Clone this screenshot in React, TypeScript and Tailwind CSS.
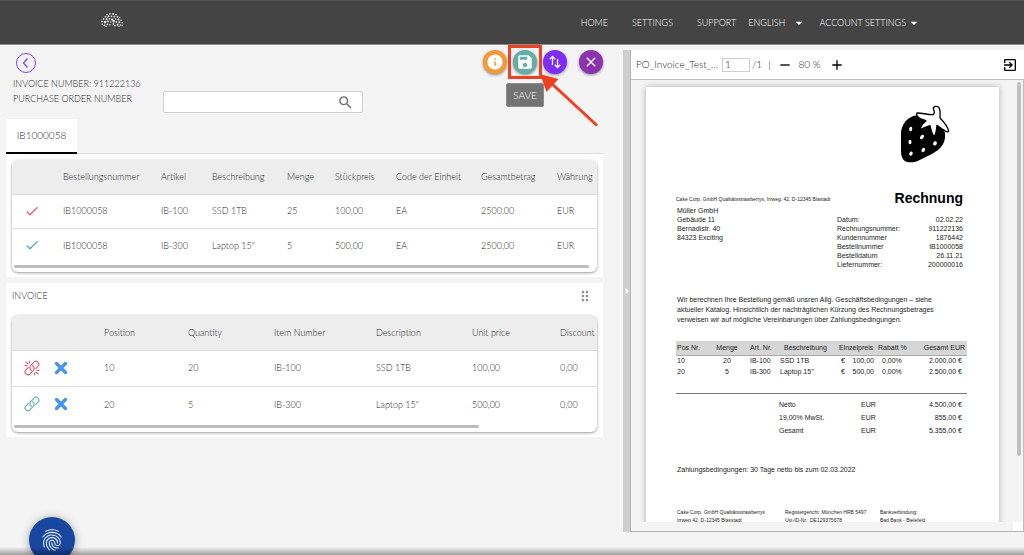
import React from "react";
import {
  MdArrowDropDown,
  MdSave,
  MdInfo,
  MdClose,
  MdSearch,
  MdCheck,
  MdAdd,
  MdRemove,
  MdExitToApp,
  MdFingerprint,
  MdDragIndicator,
  MdArrowRight,
} from "react-icons/md";

const logoDots: [number, number, number][] = [
  [6, 1.6, 0.8], [9, 0.9, 0.8], [12, 1, 0.9], [15, 1.8, 0.8], [4.5, 3.6, 0.9], [7.5, 3.2, 1],
  [10.5, 3.4, 0.8], [13.5, 3.6, 0.9], [16.5, 3.8, 0.9], [18.8, 4.6, 0.7], [2.6, 5.8, 0.9], [5.6, 6, 0.9],
  [8.4, 5.8, 0.9], [11, 6.4, 1], [12.6, 8, 1.3], [14.6, 6, 0.8], [17.4, 6.6, 1], [20, 7.2, 0.8],
  [1, 8.4, 0.9], [4, 9, 1.3], [7, 8.4, 0.9], [9.6, 9, 0.8], [15.4, 9, 0.9], [18.4, 9.2, 0.9],
  [21.2, 9.8, 0.8], [1.2, 11.4, 0.8], [3.4, 12.4, 0.9], [6.4, 11.4, 0.9], [9, 11.8, 0.8], [12.4, 11, 0.9],
  [14, 12.8, 0.8], [16.6, 11.8, 1], [19.4, 12, 0.8], [21.2, 12.4, 0.8], [5, 13.2, 0.7], [18, 13.2, 0.7],
];

function Logo() {
  return (
    <svg viewBox="0 0 22 14" className="h-3.5 w-[22px]" fill="#e4e4e4" stroke="#bdbdbd" strokeWidth="0.4">
      <path d="M4 9 7 8.4 5.6 6 7.5 3.2M12.6 8 11 6.4 13.5 3.6M17.4 6.6 18.4 9.2 16.6 11.8M12.6 8 12.4 11M4 9 3.4 12.4" fill="none" />
      {logoDots.map(([cx, cy, r], i) => (
        <circle key={i} cx={cx} cy={cy} r={r} stroke="none" />
      ))}
    </svg>
  );
}

function Strawberry() {
  return (
    <svg viewBox="88 70 156 180" className="h-[60px] w-[52px]">
      <path
        d="M94 160C94 130 116 106 144 104C184 102 221 128 226 158C229 186 214 206 188 219L144 241C134 246 120 246 110 243C98 238 95 228 94 212z"
        fill="#000"
      />
      <g fill="#fff">
        <ellipse cx="123" cy="145" rx="4.5" ry="7" transform="rotate(15 123 145)" />
        <ellipse cx="121" cy="184" rx="4.5" ry="7" />
        <ellipse cx="124" cy="219" rx="5" ry="6.5" transform="rotate(25 124 219)" />
        <ellipse cx="157" cy="169" rx="5" ry="7.5" transform="rotate(40 157 169)" />
        <ellipse cx="161" cy="208" rx="5" ry="7" transform="rotate(30 161 208)" />
        <ellipse cx="196" cy="188" rx="5.5" ry="6.5" transform="rotate(30 196 188)" />
      </g>
      <path
        d="M142 97c14-1 32 6 49 5 5-6 4-10 0-17-1-8 12-11 17-4 5 9 3 20 3 31 12 12 24 28 26 40-3 3-10 0-14-4-8-3-15-10-21-14-1 11-2 25-8 34-9-9-10-21-13-33-9 3-18 6-29 12 0-9 8-19 17-26-10-6-21-5-26-15-3-4-3-7-1-9z"
        fill="#fff"
        stroke="#000"
        strokeWidth="4"
        strokeLinejoin="round"
      />
    </svg>
  );
}

function SwapIcon() {
  return (
    <svg viewBox="0 0 16 16" className="size-4" fill="none" stroke="#fff" strokeWidth="1.3">
      <path d="M5.5 11V2.5M2.8 5.2 5.5 2.5l2.7 2.7M10.5 5v8.5M7.8 10.8l2.7 2.7 2.7-2.7" />
    </svg>
  );
}

function LinkIcon({ broken = false }: { broken?: boolean }) {
  return (
    <svg
      viewBox="0 0 24 24"
      className={broken ? "size-4 text-[#e0647d]" : "size-4 text-[#63b9ae]"}
      fill="none"
      stroke="currentColor"
      strokeWidth="1.8"
      strokeLinecap="round"
    >
      <path d="M11 15.5a4.600 4.600 0 0 1-1-7l5-5.200a4.200 4.200 0 0 1 6.200 6L17.500 13" />
      <path d="M13 8.500a4.600 4.600 0 0 1 1 7l-5 5.200a4.200 4.200 0 0 1-6.200-6L6.500 11" />
      {broken && <path d="M3 3l3 3M8.500 1.500v3M1.500 8.500h3M21 21l-3-3M15.500 22.500v-3M22.500 15.500h-3" />}
    </svg>
  );
}

function CrossIcon() {
  return (
    <svg viewBox="0 0 14 14" className="size-3.5" stroke="#4595ea" strokeWidth="3.400" strokeLinecap="round">
      <path d="M2.500 2.500l9 9M11.500 2.500l-9 9" />
    </svg>
  );
}

const round = "flex size-6 items-center justify-center rounded-full text-white shadow-[0_1px_3px_rgba(0,0,0,0.45)]";

const orderHead = ["Bestellungsnummer", "Artikel", "Beschreibung", "Menge", "Stückpreis", "Code der Einheit", "Gesamtbetrag", "Währung"];
const orderRows = [
  ["IB1000058", "IB-100", "SSD 1TB", "25", "100,00", "EA", "2500,00", "EUR"],
  ["IB1000058", "IB-300", 'Laptop 15"', "5", "500,00", "EA", "2500,00", "EUR"],
];
const orderCols = ["w-[51px]", "w-[98px]", "w-[51px]", "w-[75px]", "w-[48px]", "w-[61px]", "w-[85px]", "w-[76px]", "w-[41px]"];

const invoiceHead = ["Position", "Quantity", "Item Number", "Description", "Unit price", "Discount"];
const invoiceRows = [
  ["10", "20", "IB-100", "SSD 1TB", "100,00", "0,00"],
  ["20", "5", "IB-300", 'Laptop 15"', "500,00", "0,00"],
];
const invoiceCols = ["w-[92px]", "w-[84px]", "w-[86px]", "w-[102px]", "w-[96px]", "w-[88px]", "w-[38px]"];

const tableBox = "overflow-hidden rounded-md bg-white shadow-[0_1px_3px_rgba(0,0,0,0.4)]";

function Header() {
  const link = "flex items-center";
  return (
    <header className="flex h-[45px] shrink-0 items-center border-t border-b border-t-[#50505a] border-b-[#8a8a8a] bg-[#444] pr-[102px] pl-[101px] text-[9px] text-white">
      <a href="#home" aria-label="Start" className="-mt-1.5"><Logo /></a>
      <nav className="ml-auto flex items-center">
        <a href="#home" className={link}>HOME</a>
        <a href="#settings" className={`${link} ml-6`}>SETTINGS</a>
        <a href="#support" className={`${link} ml-6`}>SUPPORT</a>
        <button type="button" className={`${link} ml-3 gap-1.5`}>ENGLISH <MdArrowDropDown className="size-4 text-white" /></button>
        <button type="button" className={`${link} ml-3`}>ACCOUNT SETTINGS <MdArrowDropDown className="size-4 text-white" /></button>
      </nav>
    </header>
  );
}

function WorkPane() {
  return (
    <section className="min-w-0 pr-5 pl-1.5 text-[#1f1f1f]">
      <div className="flex h-[74px] items-start">
        <div className="w-[157px] pt-2 pl-[7px] text-[9px] leading-[15px]">
          <button type="button" aria-label="Back" className="ml-[3px] flex size-5 items-center justify-center rounded-full border border-[#8a3ff0]">
            <svg viewBox="0 0 12 12" className="size-3" fill="none" stroke="#8a3ff0" strokeWidth="1.300"><path d="M7.500 1.500 3.500 6l4 4.500" /></svg>
          </button>
          <p className="mt-[3px] whitespace-nowrap">INVOICE NUMBER: 911222136</p>
          <label htmlFor="po" className="block whitespace-nowrap">PURCHASE ORDER NUMBER</label>
        </div>
        <div className="mt-[46px] flex h-[22px] w-[200px] items-center rounded-xs border border-[#cfcfcf] bg-white pr-2">
          <input id="po" className="min-w-0 flex-1 px-2 text-[10px] outline-none" />
          <MdSearch className="size-[17px] text-[#6e6e6e]" />
        </div>
        <div className="mt-[5px] ml-auto flex gap-1.5">
          <button type="button" aria-label="Information" className={`${round} bg-[#f29a37]`}><MdInfo className="size-[18px]" /></button>
          <div className="relative">
            <button type="button" aria-label="Save" className={`${round} bg-[#64aea5]`}><MdSave className="size-[18px]" /></button>
            <div className="absolute -top-[5px] -left-[5px] size-[34px] border-3 border-[#ee4023]" />
            <span className="absolute top-[33px] -left-[7px] flex h-6 w-[38px] items-center justify-center rounded-xs border border-[#8c8c8c] bg-[#737373] text-[10px] text-white">SAVE</span>
            <svg viewBox="0 0 60 56" className="absolute top-6 left-[27px] h-14 w-[60px]">
              <path d="M10 8 57 51.500" stroke="#ee4023" strokeWidth="3" />
              <path d="M0 0 18.500 5 6.500 18z" fill="#ee4023" />
            </svg>
          </div>
          <button type="button" aria-label="Swap" className={`${round} bg-[#7f2cf5]`}><SwapIcon /></button>
          <button type="button" aria-label="Close" className={`${round} ml-1.5 bg-[#8b32ae]`}><MdClose className="size-4" /></button>
        </div>
      </div>

      <div className="flex">
        <button type="button" className="h-[34px] w-[71px] border-b border-black bg-white text-[10px] shadow-[0_1px_0_#000]">IB1000058</button>
      </div>

      <div className="border-t border-[#dedede] bg-white px-1.5 pt-1.5 pb-[5px]">
        <div className={tableBox}>
          <table className="w-full table-fixed text-left text-[9px]">
            <colgroup>{orderCols.map((c, i) => <col key={i} className={c} />)}</colgroup>
            <thead>
              <tr className="h-[34px] border-b border-[#dcdcdc] bg-[#ededed]">
                <td />
                {orderHead.map((h) => <th key={h} className="font-light whitespace-nowrap">{h}</th>)}
              </tr>
            </thead>
            <tbody>
              {orderRows.map((row, i) => (
                <tr key={i} className={i === 0 ? "h-[34px] border-b border-[#dedede]" : "h-[34px]"}>
                  <td className="pl-3"><MdCheck className={i === 0 ? "size-4 text-[#dc6480]" : "size-4 text-[#52b5a9]"} /></td>
                  {row.map((v, j) => <td key={j} className="whitespace-nowrap">{v}</td>)}
                </tr>
              ))}
            </tbody>
          </table>
          <div className="px-0.5 pt-[3px] pb-1"><div className="h-[3px] w-[99%] rounded-full bg-[#bdbdbd]" /></div>
        </div>
      </div>

      <div className="mt-1.5 bg-white px-1.5 pb-[5px]">
        <div className="flex h-8 items-start justify-between pt-[5px] pr-1">
          <h2 className="text-[9px] leading-4">INVOICE</h2>
          <MdDragIndicator className="size-4 text-[#8f8f8f]" />
        </div>
        <div className={tableBox}>
          <table className="w-full table-fixed text-left text-[9px]">
            <colgroup>{invoiceCols.map((c, i) => <col key={i} className={c} />)}</colgroup>
            <thead>
              <tr className="h-[35px] border-b border-[#dcdcdc] bg-[#ededed]">
                <td />
                {invoiceHead.map((h) => <th key={h} className="font-light whitespace-nowrap">{h}</th>)}
              </tr>
            </thead>
            <tbody>
              {invoiceRows.map((row, i) => (
                <tr key={i} className={i === 0 ? "h-9 border-b border-[#dedede]" : "h-9"}>
                  <td>
                    <div className="flex items-center gap-3.5 pl-3">
                      <button type="button" aria-label={i === 0 ? "Unlink" : "Link"}><LinkIcon broken={i === 0} /></button>
                      <button type="button" aria-label="Remove"><CrossIcon /></button>
                    </div>
                  </td>
                  {row.map((v, j) => <td key={j} className="whitespace-nowrap">{v}</td>)}
                </tr>
              ))}
            </tbody>
          </table>
          <div className="px-0.5 pt-[3px] pb-1"><div className="h-[3px] w-4/5 rounded-full bg-[#bdbdbd]" /></div>
        </div>
      </div>
    </section>
  );
}

const facts = [
  ["Datum:", "02.02.22"],
  ["Rechnungsnummer:", "911222136"],
  ["Kundennummer", "1876442"],
  ["Bestellnummer", "IB1000058"],
  ["Bestelldatum", "26.11.21"],
  ["Liefernummer:", "200000016"],
];

const items = [
  ["10", "20", "IB-100", "SSD 1TB", "100,00", "0,00%", "2.000,00 €"],
  ["20", "5", "IB-300", 'Laptop 15"', "500,00", "0,00%", "2.500,00 €"],
];

const totals = [
  ["Netto", "EUR", "4.500,00 €"],
  ["19,00% MwSt.", "EUR", "855,00 €"],
  ["Gesamt", "EUR", "5.355,00 €"],
];

function InvoicePage() {
  return (
    <article className="h-[500px] bg-white pt-[17px] pr-8 pl-[30px] font-['Liberation_Sans',Arial,sans-serif] text-[7px] leading-[9px] font-normal text-[#1c1c1c] shadow-[0_0_6px_rgba(0,0,0,0.3)]">
      <div className="flex justify-end pr-4"><Strawberry /></div>
      <div className="mt-[25px] flex justify-between pr-1">
        <div className="pt-1.5">
          <p className="text-[5px] whitespace-nowrap">Cake Corp. GmbH Qualitätsstrawberrys, Irrweg. 42, D-12345 Blastadt</p>
          <address className="mt-0.5 pl-px not-italic">Müller GmbH<br />Gebäude 11<br />Bernadistr. 40<br />84323 Exciting</address>
        </div>
        <div className="w-[126px]">
          <h1 className="text-right text-[14px] leading-[18px] font-bold text-black">Rechnung</h1>
          <dl className="mt-2">
            {facts.map(([k, v]) => (
              <div key={k} className="flex justify-between"><dt>{k}</dt><dd>{v}</dd></div>
            ))}
          </dl>
        </div>
      </div>
      <p className="mt-[26px] w-[270px] pl-px leading-[10px] whitespace-nowrap">
        Wir berechnen Ihre Bestellung gemäß unsren Allg. Geschäftsbedingungen – siehe<br />
        aktueller Katalog. Hinsichtlich der nachträglichen Kürzung des Rechnungsbetrages<br />
        verweisen wir auf mögliche Vereinbarungen über Zahlungsbedingungen.
      </p>
      <div className="mt-4 border-b border-[#777] pb-4">
        <table className="w-full table-fixed text-left whitespace-nowrap">
          <colgroup>
            <col className="w-[34px]" /><col className="w-[34px]" /><col className="w-[36px]" /><col className="w-[59px]" /><col className="w-[39px]" /><col className="w-[36px]" /><col className="w-[53px]" />
          </colgroup>
          <thead>
            <tr className="h-3.5 border-b border-[#aaa] bg-[#d6d6d6]">
              <th className="pl-px font-normal">Pos Nr.</th>
              <th className="text-center font-normal">Menge</th>
              <th className="pl-1.5 font-normal">Art. Nr.</th>
              <th className="pl-1 font-normal">Beschreibung</th>
              <th className="font-normal">Einzelpreis</th>
              <th className="font-normal">Rabatt %</th>
              <th className="pr-0.5 text-right font-normal">Gesamt EUR</th>
            </tr>
          </thead>
          <tbody>
            {items.map(([pos, qty, art, name, price, rebate, sum]) => (
              <tr key={pos} className="h-[11px]">
                <td className="pl-px">{pos}</td>
                <td className="text-center">{qty}</td>
                <td className="pl-1.5">{art}</td>
                <td>{name}</td>
                <td><div className="flex justify-between pr-1 pl-0.5"><span>€</span><span>{price}</span></div></td>
                <td className="pl-1">{rebate}</td>
                <td className="pr-[5px] text-right">{sum}</td>
              </tr>
            ))}
          </tbody>
        </table>
      </div>
      <table className="mt-1 ml-auto w-[188px] table-fixed text-left">
        <tbody>
          {totals.map(([k, cur, v]) => (
            <tr key={k} className="h-[13px]"><td className="w-[82px]">{k}</td><td className="w-10">{cur}</td><td className="pr-[5px] text-right">{v}</td></tr>
          ))}
        </tbody>
      </table>
      <p className="mt-7 pl-px">Zahlungsbedingungen: 30 Tage netto bis zum 02.03.2022</p>
      <footer className="mt-[34px] flex pl-px text-[5px] leading-[8px] whitespace-nowrap">
        <p className="w-[108px]">Cake Corp. GmbH Qualitätsstrawberrys<br />Irrweg 42, D-12345 Blasstadt</p>
        <p className="w-[95px]">Registergericht: München HRB 5497<br />Ust-ID-Nr.: DE129375678</p>
        <p>Bankverbindung:<br />Bad Bank - Bielefeld</p>
      </footer>
    </article>
  );
}

function Viewer() {
  return (
    <section className="mt-[5px] mb-[23px] flex min-h-0 min-w-0">
      <div className="flex w-[7px] shrink-0 items-center bg-[#cecece] text-white"><MdArrowRight className="-ml-1 size-4 shrink-0" /></div>
      <div className="flex min-w-0 flex-1 flex-col border-b border-l border-[#b5b5b5]">
        <div className="flex h-[29px] shrink-0 items-center bg-white pr-1.5 pl-[5px] text-[10px] text-[#1f1f1f]">
          <span className="w-[86px] whitespace-nowrap">PO_Invoice_Test_...</span>
          <input aria-label="Page" defaultValue="1" className="h-3.5 w-7 border border-[#cfcfcf] px-0.5 outline-none" />
          <span className="ml-0.5">/1</span>
          <span className="ml-1.5">|</span>
          <button type="button" aria-label="Zoom out" className="ml-1.5 text-black"><MdRemove className="size-4" /></button>
          <span className="mx-1.5">80 %</span>
          <button type="button" aria-label="Zoom in" className="ml-0.5 text-black"><MdAdd className="size-4" /></button>
          <button type="button" aria-label="Open" className="ml-auto text-black"><MdExitToApp className="size-4" /></button>
        </div>
        <div className="flex min-h-0 flex-1 border-t border-r border-[#bdbdbd]">
          <div className="min-w-0 flex-1 overflow-hidden pt-[7px] pr-[15px] pl-[15px]"><InvoicePage /></div>
          <div className="flex w-[9px] flex-col items-center pt-0.5"><div className="h-[85%] w-1 rounded-full bg-[#c0c0c0]" /></div>
        </div>
        <div className="flex h-[9px] shrink-0 justify-end border-r border-[#bdbdbd] bg-[#f4f4f4]"><div className="w-2.5 bg-white" /></div>
      </div>
    </section>
  );
}

export default function App() {
  return (
    <div className="relative flex h-screen flex-col overflow-hidden bg-[#f4f4f4] font-[Lato,sans-serif] font-light">
      <Header />
      <main className="grid min-h-0 flex-1 grid-cols-[623fr_401fr] grid-rows-1">
        <WorkPane />
        <Viewer />
      </main>
      <button type="button" aria-label="Fingerprint" className="absolute -bottom-2 left-[29px] flex size-[46px] items-center justify-center rounded-full bg-[#17479e] text-[#e9eefc] shadow-[0_1px_8px_rgba(0,0,0,0.35)]">
        <MdFingerprint className="size-[26px]" />
      </button>
      <div className="pointer-events-none absolute inset-x-0 bottom-0 h-2 bg-gradient-to-t from-black/35 to-transparent" />
    </div>
  );
}
